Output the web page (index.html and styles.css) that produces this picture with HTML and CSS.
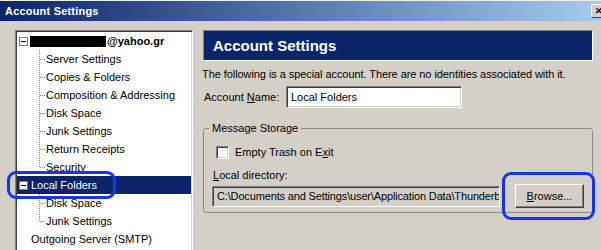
FILE: index.html
```html
<!DOCTYPE html>
<html>
<head>
<meta charset="utf-8">
<link rel="stylesheet" href="styles.css">
</head>
<body>
<div class="win">
  <div class="titlebar">
    <span class="title">Account Settings</span>
    <span class="close">✕</span>
  </div>
  <div class="content">
    <div class="tree">
      <div class="row acct"><span class="exp"></span><span class="redact"></span><b>@yahoo.gr</b></div>
      <div class="children">
        <div class="child">Server Settings</div>
        <div class="child">Copies &amp; Folders</div>
        <div class="child">Composition &amp; Addressing</div>
        <div class="child">Disk Space</div>
        <div class="child">Junk Settings</div>
        <div class="child">Return Receipts</div>
        <div class="child">Security</div>
      </div>
      <div class="row acct sel"><span class="exp"></span><span class="lbl">Local Folders</span></div>
      <div class="children">
        <div class="child">Disk Space</div>
        <div class="child">Junk Settings</div>
      </div>
      <div class="row plain">Outgoing Server (SMTP)</div>
    </div>
    <div class="panel">
      <div class="header">Account Settings</div>
      <div class="desc">The following is a special account. There are no identities associated with it.</div>
      <div class="namerow">
        <span class="namelbl">Account <u>N</u>ame:</span>
        <span class="field namefield">Local Folders</span>
      </div>
      <div class="group">
        <div class="legend">Message Storage</div>
        <div class="checkrow"><span class="checkbox"></span><span>Empty Trash on E<u>x</u>it</span></div>
        <div class="dirlbl"><u>L</u>ocal directory:</div>
        <div class="dirrow">
          <span class="field dirfield">C:\Documents and Settings\user\Application Data\Thunderb</span>
          <span class="button"><u>B</u>rowse...</span>
        </div>
      </div>
    </div>
  </div>
  <div class="mark mark1"></div>
  <div class="mark mark2"></div>
</div>
</body>
</html>
```
FILE: styles.css
```css
* { box-sizing: border-box; }
html, body { margin: 0; padding: 0; }
body {
  width: 601px;
  height: 250px;
  overflow: hidden;
  background: #d4d0c8;
  font-family: "Liberation Sans", Arial, sans-serif;
  font-size: 11px;
  color: #000;
}
.win {
  position: relative;
  height: 250px;
  overflow: hidden;
  border-top: 1px solid #f0eee8;
}
.titlebar {
  height: 20px;
  display: flex;
  align-items: center;
  padding-left: 5px;
  background: linear-gradient(to right, #0a246a, #a6caf0);
  color: #fff;
  font-weight: bold;
  font-size: 11px;
  letter-spacing: 0.2px;
  overflow: hidden;
}
.close {
  margin-left: auto;
  margin-right: -6px;
  width: 16px;
  height: 14px;
  background: #d4d0c8;
  border: 1px solid;
  border-color: #fff #404040 #404040 #fff;
  color: #000;
  font-size: 9px;
  line-height: 12px;
  text-align: center;
  letter-spacing: 0;
}
.content {
  display: flex;
  align-items: flex-start;
  padding: 9px 0 0 15px;
}
.tree {
  width: 178px;
  height: 222px;
  flex: none;
  overflow: hidden;
  background: #fff;
  border: 1px solid;
  border-color: #808080 #fff #fff #808080;
  box-shadow: inset 1px 1px #404040, inset -1px -1px #d4d0c8;
  padding: 1px;
}
.row {
  height: 18px;
  display: flex;
  align-items: center;
  white-space: nowrap;
}
.acct { padding-left: 2px; }
.exp {
  width: 9px;
  height: 9px;
  flex: none;
  border: 1px solid #808080;
  background: #fff linear-gradient(#000, #000) center / 5px 1px no-repeat;
  margin-right: 2px;
}
.redact {
  width: 76px;
  height: 11px;
  background: #000;
  margin-right: 1px;
}
.sel {
  background: #0a246a;
  color: #fff;
}
.sel .lbl { margin-left: 1px; }
.plain { padding-left: 14px; }
.child {
  height: 18px;
  line-height: 18px;
  padding-left: 29px;
  white-space: nowrap;
  background:
    repeating-linear-gradient(to bottom, #808080 0 1px, transparent 1px 2px) 22px 0 / 1px 100% no-repeat,
    repeating-linear-gradient(to right, #808080 0 1px, transparent 1px 2px) 23px 9px / 6px 1px no-repeat;
}
.child:last-child {
  background:
    repeating-linear-gradient(to bottom, #808080 0 1px, transparent 1px 2px) 22px 0 / 1px 10px no-repeat,
    repeating-linear-gradient(to right, #808080 0 1px, transparent 1px 2px) 23px 9px / 6px 1px no-repeat;
}
.panel {
  width: 390px;
  margin-left: 10px;
  flex: none;
}
.header {
  height: 31px;
  background: #0a246a;
  border: 1px solid;
  border-color: #808080 #fff #fff #808080;
  color: #fff;
  font-weight: bold;
  font-size: 15px;
  padding-left: 9px;
  display: flex;
  align-items: center;
}
.desc {
  margin: 6px 0 0 -1px;
  line-height: 14px;
  white-space: nowrap;
  letter-spacing: -0.07px;
}
.namerow {
  display: flex;
  align-items: center;
  margin-top: 5px;
}
.namelbl {
  width: 83px;
  padding-left: 1px;
}
.field {
  display: block;
  background: #fff;
  border: 1px solid;
  border-color: #808080 #fff #fff #808080;
  box-shadow: inset 1px 1px #404040, inset -1px -1px #d4d0c8;
  padding-left: 4px;
  white-space: nowrap;
  overflow: hidden;
}
.namefield {
  width: 176px;
  height: 22px;
  line-height: 20px;
}
.group {
  margin-top: 20px;
  height: 85px;
  border: 1px solid #8a8a8a;
  border-radius: 3px;
  padding-left: 8px;
}
.legend {
  display: block;
  width: max-content;
  margin-top: -8px;
  margin-left: -3px;
  padding: 0 3px;
  line-height: 14px;
  background: #d4d0c8;
}
.checkrow {
  display: flex;
  align-items: center;
  height: 18px;
  margin-top: 8px;
  margin-left: 4px;
}
.checkbox {
  width: 13px;
  height: 13px;
  background: #fff;
  border: 1px solid;
  border-color: #808080 #fff #fff #808080;
  box-shadow: inset 1px 1px #404040, inset -1px -1px #d4d0c8;
  margin-right: 6px;
}
.dirlbl {
  margin-top: 7px;
  line-height: 14px;
  margin-left: 1px;
}
.dirrow {
  display: flex;
  align-items: center;
  margin-top: 2px;
}
.dirfield {
  width: 288px;
  height: 21px;
  line-height: 19px;
  background: #d4d0c8;
  letter-spacing: -0.15px;
}
.button {
  margin-left: 15px;
  width: 69px;
  height: 24px;
  border: 1px solid;
  border-color: #fff #404040 #404040 #fff;
  box-shadow: inset -1px -1px #808080;
  display: flex;
  align-items: center;
  justify-content: center;
}
.mark {
  position: absolute;
  border: 3px solid #1733f2;
  border-radius: 9px;
}
.mark1 { left: 7px; top: 170px; width: 109px; height: 28px; }
.mark2 { left: 502px; top: 171px; width: 93px; height: 48px; }
```
